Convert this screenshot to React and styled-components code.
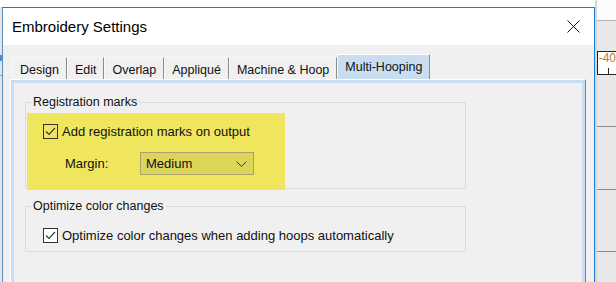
import React from 'react';
import styled, { createGlobalStyle } from 'styled-components';

const GlobalStyle = createGlobalStyle`
    html, body {
        margin: 0;
        padding: 0;
        background: #ffffff;
    }
    body {
        font-family: "Liberation Sans", Arial, sans-serif;
        color: #000000;
    }
`;

const tabs = ['Design', 'Edit', 'Overlap', 'Appliqué', 'Machine & Hoop', 'Multi-Hooping'];

function CheckMark() {
    return (
        <svg width="13" height="13" viewBox="0 0 13 13">
            <path d="M2 6.5 L5 9.5 L11 3" fill="none" stroke="#3a3a3a" strokeWidth="1.2" />
        </svg>
    );
}

export default function App() {
    return (
        <>
            <GlobalStyle />
            <Screen>
                <LeftEdge>
                    <EdgeMark $top={48} $color="#4a8fd6" $h={6} />
                    <EdgeMark $top={14} $color="#9a9a9a" $h={1} />
                </LeftEdge>
                <Dialog>
                    <TitleBar>
                        <Title>Embroidery Settings</Title>
                        <svg width="13" height="13" viewBox="0 0 13 13">
                            <path d="M0.5 0.5 L12.5 12.5 M12.5 0.5 L0.5 12.5" stroke="#111" strokeWidth="1" />
                        </svg>
                    </TitleBar>
                    <Body>
                        <TabRow>
                            {tabs.map((t) => (
                                <Tab key={t} $active={t === 'Multi-Hooping'}>{t}</Tab>
                            ))}
                        </TabRow>
                        <Panel>
                            <Group>
                                <Legend>Registration marks</Legend>
                                <Highlight>
                                    <CheckRow>
                                        <Box $bg="transparent"><CheckMark /></Box>
                                        <span>Add registration marks on output</span>
                                    </CheckRow>
                                    <MarginRow>
                                        <MarginLabel>Margin:</MarginLabel>
                                        <Select>
                                            <span>Medium</span>
                                            <svg width="11" height="6" viewBox="0 0 11 6">
                                                <path d="M0.5 0.5 L5.5 5.5 L10.5 0.5" fill="none" stroke="#3a3a3a" strokeWidth="1" />
                                            </svg>
                                        </Select>
                                    </MarginRow>
                                </Highlight>
                            </Group>
                            <Group $second>
                                <Legend>Optimize color changes</Legend>
                                <CheckRow $plain>
                                    <Box $bg="#ffffff"><CheckMark /></Box>
                                    <span>Optimize color changes when adding hoops automatically</span>
                                </CheckRow>
                            </Group>
                        </Panel>
                    </Body>
                </Dialog>
                <RightEdge>
                    <TopBand />
                    <Ruler><RulerText>-40</RulerText><RulerTick /></Ruler>
                    <GridLine $gap={51} />
                    <GridLine $gap={62} />
                    <GridLine $gap={61} />
                </RightEdge>
            </Screen>
        </>
    );
}

const Screen = styled.div`
    width: 616px;
    height: 282px;
    overflow: hidden;
    display: flex;
    align-items: flex-start;
    background: #ffffff;
`;

const LeftEdge = styled.div`
    width: 2px;
    align-self: stretch;
    margin-top: 7px;
    background: #e4e4e4;
    display: flex;
    flex-direction: column;
`;

const EdgeMark = styled.div`
    margin-top: ${(p) => p.$top}px;
    height: ${(p) => p.$h}px;
    background: ${(p) => p.$color};
`;

const Dialog = styled.div`
    box-sizing: border-box;
    width: 597px;
    height: 420px;
    margin-top: 7px;
    border: 1px solid #1d7bd6;
    border-left-color: #5f8fc0;
    background: #f0f0f0;
    display: flex;
    flex-direction: column;
`;

const TitleBar = styled.div`
    height: 37px;
    flex: none;
    background: #ffffff;
    display: flex;
    align-items: center;
    justify-content: space-between;
    padding: 0 14px 0 9px;
`;

const Title = styled.span`
    font-size: 15px;
    color: #000000;
`;

const Body = styled.div`
    flex: 1;
    display: flex;
    flex-direction: column;
    padding: 9px 8px 0 7px;
`;

const TabRow = styled.div`
    display: flex;
    align-items: flex-end;
    height: 25px;
    padding-left: 2px;
`;

const Tab = styled.div`
    box-sizing: border-box;
    height: ${(p) => (p.$active ? '25px' : '22px')};
    padding: 0 7px 0 7px;
    display: flex;
    align-items: center;
    font-size: 12.5px;
    color: #111111;
    background: ${(p) => (p.$active ? '#c9ddf1' : '#f0f0f0')};
    border-top: 1px solid ${(p) => (p.$active ? '#ffffff' : '#f8f8f8')};
    border-left: 1px solid #fafafa;
    border-right: 1px solid #8c8c8c;
    padding-top: ${(p) => (p.$active ? '0' : '2px')};
`;

const Panel = styled.div`
    flex: 1;
    box-sizing: border-box;
    border: 1px solid #808080;
    border-top-color: #ffffff;
    border-left-color: #ffffff;
    box-shadow: inset 0 0 0 3px #c9dcf0;
    background: #f0f0f0;
    padding: 15px 0 0 14px;
    display: flex;
    flex-direction: column;
    align-items: flex-start;
`;

const Group = styled.fieldset`
    box-sizing: border-box;
    width: 441px;
    margin: ${(p) => (p.$second ? '10px' : '0')} 0 0 0;
    padding: 0 0 ${(p) => (p.$second ? '8px' : '0')} 0;
    border: 1px solid #dcdcdc;
    min-width: 0;
`;

const Legend = styled.legend`
    margin-left: 5px;
    padding: 0 2px;
    font-size: 12.5px;
    line-height: 15px;
    color: #111111;
`;

const Highlight = styled.div`
    width: 258px;
    margin: 3px 0 -2px 1px;
    padding: 11px 0 15px 16px;
    box-sizing: border-box;
    background: #efe65e;
    display: flex;
    flex-direction: column;
    gap: 13px;
`;

const CheckRow = styled.div`
    display: flex;
    align-items: center;
    gap: 4px;
    font-size: 13px;
    color: #111111;
    padding: ${(p) => (p.$plain ? '14px 0 0 17px' : '0')};
`;

const Box = styled.div`
    box-sizing: border-box;
    width: 15px;
    height: 15px;
    border: 1px solid #333333;
    background: ${(p) => p.$bg};
    display: flex;
    align-items: center;
    justify-content: center;
`;

const MarginRow = styled.div`
    display: flex;
    align-items: center;
    font-size: 13px;
    color: #111111;
    padding-left: 22px;
`;

const MarginLabel = styled.span`
    width: 75px;
`;

const Select = styled.div`
    box-sizing: border-box;
    width: 114px;
    height: 23px;
    border: 1px solid #a8a26a;
    background: #ddd45a;
    display: flex;
    align-items: center;
    justify-content: space-between;
    padding: 0 6px 0 5px;
`;

const RightEdge = styled.div`
    flex: 1;
    align-self: stretch;
    background: #e8e8e8;
    border-left: 2px solid #d6d6d6;
    display: flex;
    flex-direction: column;
`;

const TopBand = styled.div`
    height: 20px;
    background: #fbfbfb;
    border-bottom: 1px solid #b4b4b4;
`;

const Ruler = styled.div`
    margin-top: 30px;
    height: 22px;
    border: 1px solid #222222;
    border-right: none;
    background: #ffffff;
    display: flex;
    flex-direction: column;
    padding-left: 1px;
`;

const RulerText = styled.span`
    font-size: 12px;
    line-height: 12px;
    color: #c47a1c;
`;

const RulerTick = styled.div`
    margin: 4px 0 0 9px;
    width: 1px;
    height: 6px;
    background: #222222;
`;

const GridLine = styled.div`
    margin-top: ${(p) => p.$gap}px;
    height: 1px;
    background: #8a8a8a;
`;
